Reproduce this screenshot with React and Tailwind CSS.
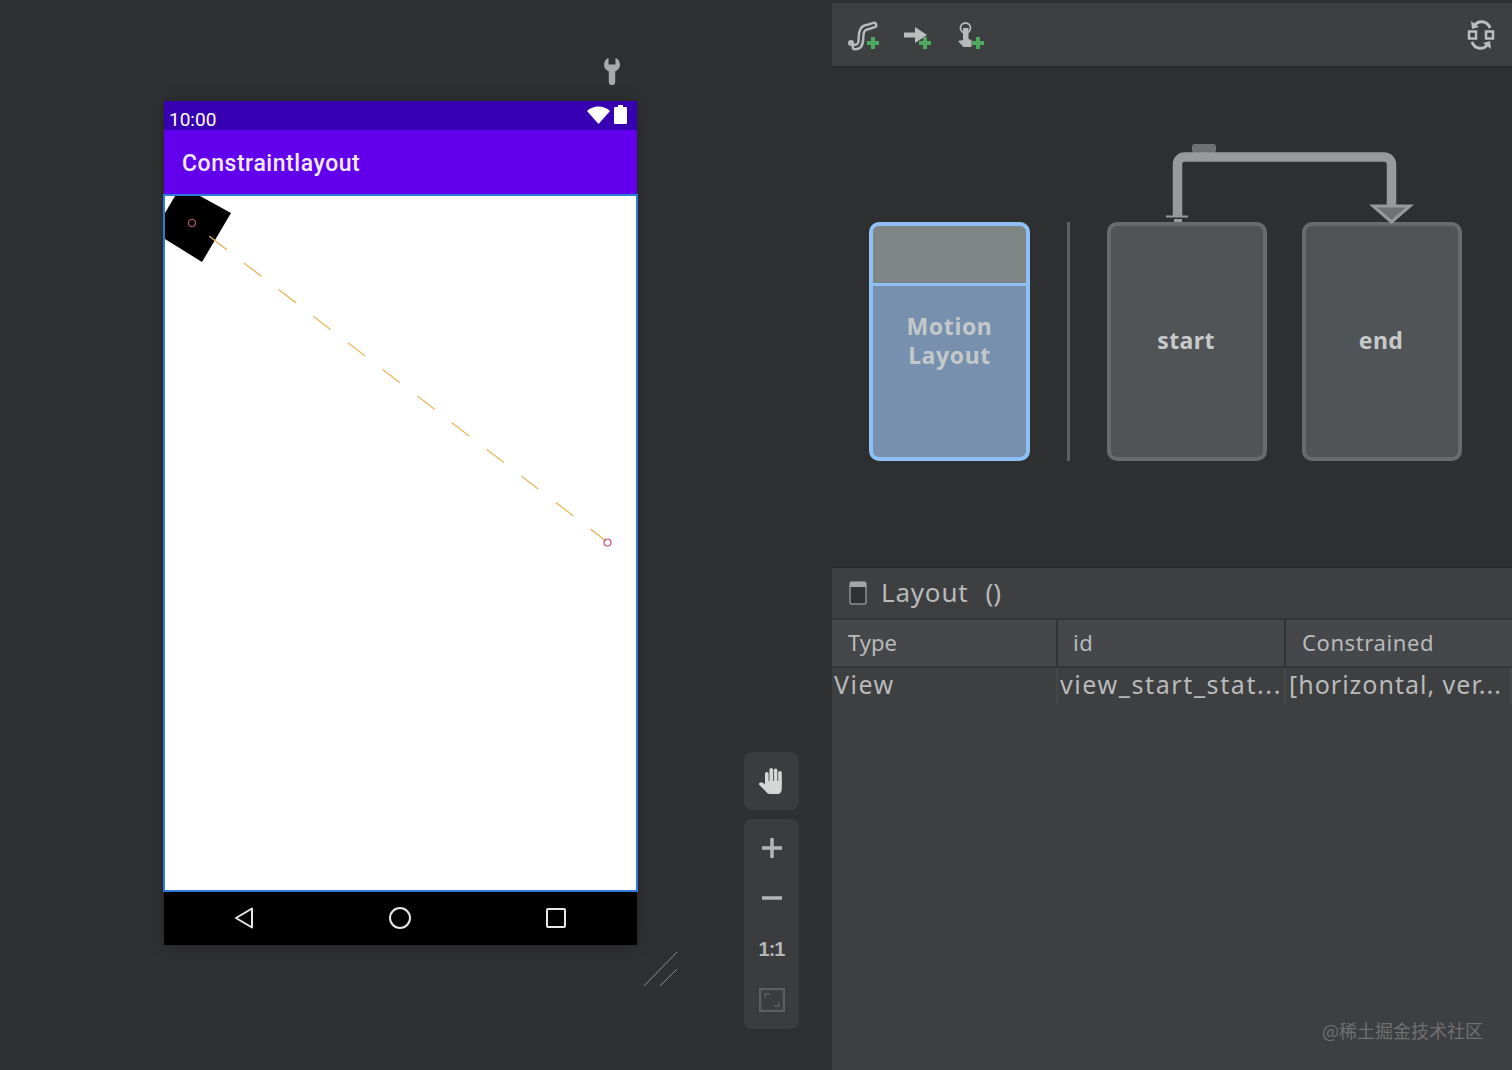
const sans = "font-['Noto_Sans','Liberation_Sans',sans-serif]";

const PlusBadge = ({ x, y }) => (
  <path d={`M${x - 6} ${y}h12M${x} ${y - 6}v12`} stroke="#4fa85f" strokeWidth="4" fill="none" />
);

const AddTransition = () => (
  <svg width="36" height="36" viewBox="0 0 36 36" fill="none">
    <circle cx="5" cy="25" r="3" fill="#b8b9ba" />
    <path d="M9 29C14 29 15 25 15 20C15 13 17 9 22 9L28 7" stroke="#b8b9ba" strokeWidth="7" strokeLinecap="round" />
    <path d="M9 29C14 29 15 25 15 20C15 13 17 9 22 9L28 7" stroke="#3d3e40" strokeWidth="2" strokeLinecap="round" />
    <PlusBadge x={27} y={25} />
  </svg>
);

const AddArrow = () => (
  <svg width="36" height="36" viewBox="0 0 36 36" fill="none">
    <path d="M4 17h13" stroke="#bcbdbe" strokeWidth="5" />
    <path d="M15 9l12 8-12 8z" fill="#bcbdbe" />
    <PlusBadge x={25} y={25} />
  </svg>
);

const AddTouch = () => (
  <svg width="36" height="36" viewBox="0 0 36 36" fill="none">
    <circle cx="11.500" cy="10" r="5" stroke="#b8b9ba" strokeWidth="1.800" />
    <path d="M9 10h5.500v11l3 1v7H9.500L4 23l5-1z" fill="#b8b9ba" />
    <PlusBadge x={24} y={25} />
  </svg>
);

const SyncIcon = () => (
  <svg width="30" height="36" viewBox="0 0 30 36" fill="none" stroke="#bcbdbe">
    <path d="M24 10C21 2 12 2 8 8" strokeWidth="3" />
    <path d="M5 3l1 8 7-2z" fill="#bcbdbe" stroke="none" />
    <path d="M6 24C9 32 18 32 22 26" strokeWidth="3" />
    <path d="M25 31l-1-8-7 2z" fill="#bcbdbe" stroke="none" />
    <rect x="3" y="13.500" width="7" height="7" strokeWidth="2.500" />
    <rect x="20" y="13.500" width="7" height="7" strokeWidth="2.500" />
  </svg>
);

const Wrench = () => (
  <svg width="18" height="28" viewBox="0 0 18 28">
    <path d="M5.500 1C2.500 2 1 5 1 8c0 3 2 5 4.800 6.500V25a3.200 3.200 0 0 0 6.400 0V14.500C15 13 17 11 17 8c0-3-1.500-6-4.500-7v6.500h-7z" fill="#a9aaab" />
  </svg>
);

const HandIcon = () => (
  <svg width="28" height="28" viewBox="0 0 28 28" fill="#d5d6d6">
    <rect x="7" y="5" width="3.600" height="12" rx="1.800" />
    <rect x="11.400" y="1" width="3.600" height="16" rx="1.800" />
    <rect x="15.800" y="1.500" width="3.600" height="16" rx="1.800" />
    <rect x="20.200" y="4" width="3.600" height="14" rx="1.800" />
    <path d="M7 14h16.800v8c0 3-2 5-4 5h-8c-2 0-3-1-4.500-3L1 17.500c-.5-1 .5-2 2-2 2 0 3 1 4 2z" />
  </svg>
);

const NavBar = () => (
  <div className="h-[53px] shrink-0 bg-black flex items-center justify-between pl-[70px] pr-[70px] pb-[2px]">
    <svg width="20" height="22" viewBox="0 0 20 22" fill="none" stroke="#e8e8e8" strokeWidth="2" strokeLinejoin="round">
      <path d="M18 1.500v19L2 11z" />
    </svg>
    <svg width="24" height="24" viewBox="0 0 24 24" fill="none" stroke="#e8e8e8" strokeWidth="2">
      <circle cx="12" cy="12" r="10" />
    </svg>
    <svg width="22" height="22" viewBox="0 0 22 22" fill="none" stroke="#e8e8e8" strokeWidth="2">
      <rect x="2" y="2" width="18" height="18" rx="1" />
    </svg>
  </div>
);

const Phone = () => (
  <div className="relative w-[473px] h-[844px] flex flex-col shadow-[0_0_14px_rgba(0,0,0,0.25)]">
    <div className="h-[29px] shrink-0 bg-[#3700b3] flex items-center justify-between pl-[5px] pr-[10px]">
      <span className="font-['Roboto',sans-serif] text-[19px] leading-none text-white mt-[7px]">10:00</span>
      <div className="flex items-center gap-[4px] -mt-[2px] -ml-px">
        <svg width="23" height="18" viewBox="0 0 23 18">
          <path d="M0 5C6-1 17-1 23 5L11.500 18z" fill="#fff" />
        </svg>
        <svg width="13" height="19" viewBox="0 0 13 19">
          <path d="M4 0h5v2h3a1 1 0 0 1 1 1v15a1 1 0 0 1-1 1H1a1 1 0 0 1-1-1V3a1 1 0 0 1 1-1h3z" fill="#fff" />
        </svg>
      </div>
    </div>
    <div className="h-[64px] shrink-0 bg-[#6200ee] flex items-center pl-[18px]">
      <span className="font-['Roboto',sans-serif] font-medium text-[23px] tracking-[0.55px] text-[#f3ecfd] mt-[5px]">Constraintlayout</span>
    </div>
    <div className="relative -mx-px h-[698px] shrink-0 bg-white border-2 border-[#2f7ad6]">
      <svg className="absolute left-0 top-0 w-full h-full" viewBox="0 0 471 694" fill="none">
        <polygon points="10,0 35,0 66,17 37,66 0,43 0,17" fill="#000" />
        <line x1="27" y1="27" x2="441" y2="345" stroke="#e8b860" strokeWidth="1.300" strokeDasharray="21.850 21.850" strokeDashoffset="21.850" />
        <circle cx="27" cy="27" r="3.500" stroke="#b5566f" strokeWidth="1.200" />
        <circle cx="442.500" cy="346.500" r="3.500" stroke="#c2476a" strokeWidth="1.200" />
      </svg>
    </div>
    <NavBar />
    <svg className="absolute left-[480px] top-[851px]" width="34" height="34" viewBox="0 0 34 34" fill="none" stroke="#8b8c8d" strokeWidth="1">
      <path d="M0 34L33 0M16 34L33 17" />
    </svg>
  </div>
);

const ZoomTools = () => (
  <div className="flex flex-col gap-[9px] w-[55px]">
    <div className="h-[58px] rounded-lg bg-[#3b3c3e] flex items-center justify-center">
      <HandIcon />
    </div>
    <div className="h-[210px] rounded-lg bg-[#3b3c3e] flex flex-col items-center text-[#b5b6b7]">
      <div className="h-[51px] mt-[3px] flex items-center justify-center">
        <svg width="20" height="20" viewBox="0 0 20 20"><path d="M0 10h20M10 0v20" stroke="#b5b6b7" strokeWidth="3.500" /></svg>
      </div>
      <div className="h-[50px] flex items-center justify-center">
        <svg width="20" height="4" viewBox="0 0 20 4"><path d="M0 2h20" stroke="#b5b6b7" strokeWidth="3.500" /></svg>
      </div>
      <div className="h-[50px] pt-[2px] flex items-center justify-center font-['Liberation_Sans',sans-serif] font-bold text-[20px] tracking-[-1px]">1:1</div>
      <div className="h-[53px] flex items-center justify-center">
        <svg width="26" height="24" viewBox="0 0 26 24" fill="none" stroke="#5c5e60">
          <rect x="1" y="1" width="24" height="22" strokeWidth="2.500" />
          <path d="M6 10V6h5M20 14v4h-5" strokeWidth="1.500" />
        </svg>
      </div>
    </div>
  </div>
);

const StateCard = ({ label, className }) => (
  <div className={`w-[160px] h-[239px] rounded-[10px] border-4 border-[#686a6b] bg-[#505457] flex items-center justify-center ${className}`}>
    <span className={`${sans} font-bold text-[23px] tracking-[0.4px] text-[#c8c9c9] -mt-[3px] -ml-[2px]`}>{label}</span>
  </div>
);

const Graph = () => (
  <div className="relative h-[498px] bg-[#2e2f31] pt-[154px] pl-[37px] flex items-start">
    <div className="w-[161px] h-[239px] rounded-[10px] border-4 border-[#8fc0f5] bg-[#7690ad] overflow-hidden flex flex-col">
      <div className="h-[57px] shrink-0 bg-[#7f8485] border-b-[3px] border-[#8fc0f5] box-content" />
      <div className={`pt-[26px] text-center ${sans} font-bold text-[23px] tracking-[0.6px] leading-[29px] text-[#c4c8cb]`}>
        Motion<br />Layout
      </div>
    </div>
    <div className="w-[3px] h-[239px] bg-[#5f6163] ml-[37px] mr-[37px]" />
    <StateCard label="start" />
    <StateCard label="end" className="ml-[35px]" />
    <svg className="absolute left-0 top-0" width="680" height="240" viewBox="832 68 680 240" fill="none">
      <rect x="1192" y="144" width="24" height="9" rx="3" fill="#6f7173" />
      <path d="M1177.500 216V164a7 7 0 0 1 7-7H1384a7.500 7.500 0 0 1 7.500 7.500V208" stroke="#98999a" strokeWidth="9.500" />
      <path d="M1166 216.500h22" stroke="#98999a" strokeWidth="2" />
      <path d="M1174 219h8v3h-8z" fill="#98999a" />
      <path d="M1373 206h37l-18.500 16z" fill="#6f7173" stroke="#98999a" strokeWidth="3" />
    </svg>
  </div>
);

const Cell = ({ className, children }) => (
  <div className={`h-full flex items-center border-r-2 ${className}`}>{children}</div>
);

const Properties = () => (
  <div className={`flex-1 bg-[#3e3f41] text-[#b8babb] ${sans}`}>
    <div className="h-[54px] border-t-2 border-b-2 border-t-[#2a2b2d] border-b-[#353638] flex items-center pl-[17px]">
      <svg width="18" height="24" viewBox="0 0 18 24" fill="none">
        <rect x="1" y="1" width="16" height="22" rx="2" fill="#2f3234" stroke="#8d9093" strokeWidth="1.500" />
        <path d="M1 3a2 2 0 0 1 2-2h12a2 2 0 0 1 2 2v3H1z" fill="#a4a7aa" />
      </svg>
      <span className="ml-[14px] text-[26px] tracking-[0.8px] leading-none -mt-[2px]">Layout</span>
      <span className="ml-[17px] text-[26px] leading-none -mt-[2px]">()</span>
    </div>
    <div className="h-[48px] bg-[#46474a] border-b-2 border-[#353638] flex items-center text-[22px] tracking-[0.6px]">
      <Cell className="w-[226px] pl-[16px] border-[#333436]"><span className="tracking-[0px] -mt-[2px]">Type</span></Cell>
      <Cell className="w-[228px] pl-[15px] border-[#333436]"><span className="-mt-[2px]">id</span></Cell>
      <div className="pl-[16px] -mt-[2px]">Constrained</div>
    </div>
    <div className="h-[36px] flex items-center text-[25px]">
      <Cell className="w-[226px] pl-[2px] border-[#46474a] tracking-[1.500px]"><span className="-mt-[2px]">View</span></Cell>
      <Cell className="w-[228px] pl-[2px] border-[#46474a] tracking-[1.600px]"><span className="-mt-[2px]">view_start_stat...</span></Cell>
      <Cell className="w-[226px] pl-[3px] border-[#46474a] tracking-[1px]"><span className="-mt-[2px]">[horizontal, ver...</span></Cell>
    </div>
  </div>
);

export default function App() {
  return (
    <div className="relative w-[1512px] h-[1070px] flex overflow-hidden bg-[#2f3032]">
      <div className="w-[832px] h-full flex pl-[164px] pt-[57px]">
        <div className="flex flex-col w-[473px]">
          <div className="h-[44px] flex justify-end pr-[16px]">
            <Wrench />
          </div>
          <Phone />
        </div>
        <div className="ml-[107px] mt-[695px]">
          <ZoomTools />
        </div>
      </div>
      <div className="w-[680px] h-full flex flex-col">
        <div className="h-[68px] bg-[#3e3f41] border-t-[3px] border-b-[2px] border-t-[#2f3032] border-b-[#2a2b2d] flex items-center pl-[14px] pr-[16px] pt-[3px]">
          <AddTransition />
          <div className="ml-[18px]"><AddArrow /></div>
          <div className="ml-[18px]"><AddTouch /></div>
          <div className="ml-auto"><SyncIcon /></div>
        </div>
        <Graph />
        <Properties />
      </div>
      <div className="absolute right-[29px] bottom-[31px] font-['Noto_Sans_CJK_SC',sans-serif] text-[18px] leading-none text-[#6f7072]">
        @稀土掘金技术社区
      </div>
    </div>
  );
}
